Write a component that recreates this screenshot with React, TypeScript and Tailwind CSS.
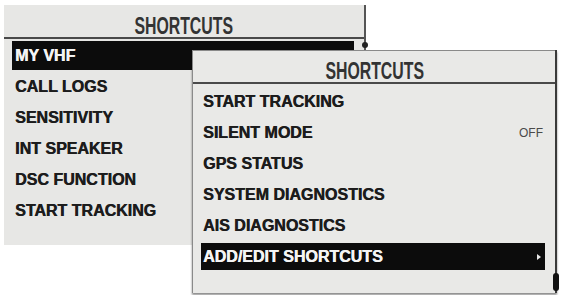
import React from "react";

const font = { fontFamily: '"Liberation Sans", Arial, sans-serif' };

function Title() {
  return (
    <div className="flex items-end justify-center h-full">
      <span className="inline-block text-[24px] leading-[24px] font-bold text-[#333] scale-x-[0.66] translate-y-[1px]">
        SHORTCUTS
      </span>
    </div>
  );
}

export default function App() {
  const back = ["MY VHF", "CALL LOGS", "SENSITIVITY", "INT SPEAKER", "DSC FUNCTION", "START TRACKING"];
  const front = ["START TRACKING", "SILENT MODE", "GPS STATUS", "SYSTEM DIAGNOSTICS", "AIS DIAGNOSTICS", "ADD/EDIT SHORTCUTS"];
  return (
    <div className="relative w-[565px] h-[295px] bg-white overflow-hidden" style={font}>
      {/* back panel */}
      <div className="ml-[4px] mt-[5px] w-[362px] h-[240px] bg-[#e7e7e5] border-r-2 border-[#555] flex flex-col">
        <div className="h-[34px] border-b-2 border-[#4a4a4a]">
          <Title />
        </div>
        <div className="flex flex-col pt-[1px]">
          {back.map((t, i) => (
            <div key={t} className="h-[31px] px-2 py-[1px]">
              <div
                className={`h-full flex items-center px-[3px] text-[16px] font-bold [text-shadow:0.5px_0_0_currentColor] ${
                  i === 0 ? "bg-[#0c0c0c] text-[#f4f4f4] mr-[2px]" : "text-[#1c1c1c]"
                }`}
              >
                {t}
              </div>
            </div>
          ))}
        </div>
      </div>
      {/* back scroll thumb dot */}
      <div className="absolute left-[362px] top-[42px] w-[6px] h-[6px] rounded-full bg-[#222]" />

      {/* front panel */}
      <div className="absolute left-[192px] top-[50px] w-[365px] h-[243px] bg-[#e9e9e7] border-l border-t border-[#8a8a8a] shadow-[0_2px_2px_rgba(0,0,0,0.45)] flex flex-col">
        <div className="h-[33px] border-b-2 border-[#4a4a4a]">
          <Title />
        </div>
        <div className="flex flex-col pt-[2px]">
          {front.map((t, i) => (
            <div key={t} className="h-[31px] pl-[8px] pr-[12px] py-[2px]">
              <div
                className={`h-full flex items-center justify-between px-[2px] text-[16px] font-bold [text-shadow:0.5px_0_0_currentColor] ${
                  i === 5 ? "bg-[#0c0c0c] text-[#f4f4f4]" : "text-[#1c1c1c]"
                }`}
              >
                <span>{t}</span>
                {i === 1 && (
                  <span className="text-[12px] font-normal text-[#4a4a4a] [text-shadow:none]">OFF</span>
                )}
                {i === 5 && (
                  <svg width="6" height="8" viewBox="0 0 6 8" className="mr-[1px]">
                    <path d="M1 1 L5 4 L1 7 Z" fill="#e8e8e8" />
                  </svg>
                )}
              </div>
            </div>
          ))}
        </div>
        {/* scroll track */}
        <div className="absolute right-0 top-[-1px] bottom-0 w-[2px] bg-[#3a3a3a]" />
        <div className="absolute right-[-2px] top-[222px] w-[6px] h-[18px] rounded-full bg-[#111]" />
      </div>
    </div>
  );
}
